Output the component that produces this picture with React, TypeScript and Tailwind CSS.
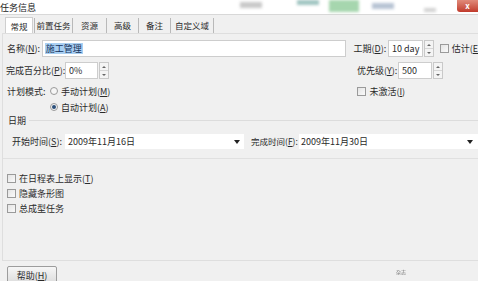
import React from "react";

const U = ({ children }: { children: React.ReactNode }) => (
    <span className="underline underline-offset-1">{children}</span>
);

const Spinner = () => (
    <div className="flex flex-col w-[10px] h-[17px] border border-[#c9c9c9] bg-[#f4f4f4] ml-[1px]">
        <div className="flex-1 flex items-center justify-center border-b border-[#d6d6d6]">
            <div className="w-0 h-0 border-l-[2px] border-r-[2px] border-b-[2px] border-l-transparent border-r-transparent border-b-[#666]" />
        </div>
        <div className="flex-1 flex items-center justify-center">
            <div className="w-0 h-0 border-l-[2px] border-r-[2px] border-t-[2px] border-l-transparent border-r-transparent border-t-[#666]" />
        </div>
    </div>
);

const Check = () => (
    <div className="w-[9px] h-[9px] border border-[#9a9a9a] bg-gradient-to-br from-[#e4e4e4] to-[#fafafa]" />
);

const Radio = ({ on }: { on?: boolean }) => (
    <div className="w-[8px] h-[8px] rounded-full border border-[#9a9a9a] bg-[#f6f6f6] flex items-center justify-center">
        {on && <div className="w-[4px] h-[4px] rounded-full bg-[#2a4f7a]" />}
    </div>
);

const Arrow = () => (
    <div className="w-0 h-0 border-l-[3px] border-r-[3px] border-t-[4px] border-l-transparent border-r-transparent border-t-[#222]" />
);

export default function App() {
    return (
        <div
            className="w-[478px] h-[281px] overflow-hidden bg-[#f0f0f0] text-[9px] leading-none text-[#2a2a2a] flex flex-col"
            style={{ fontFamily: '"Noto Sans CJK SC", "Noto Sans", sans-serif' }}
        >
            {/* title bar */}
            <div className="h-[15px] shrink-0 bg-white border-b border-[#d8d8d8] flex items-start">
                <span className="mt-[3px] text-[9px] text-[#222]">任务信息</span>
                <div className="ml-[204px] mt-[2px] w-[22px] h-[6px] bg-[#c9c9c9] blur-[1.5px]" />
                <div className="ml-[35px] mt-[0px] w-[22px] h-[5px] bg-[#9fc4c0] blur-[1.5px]" />
                <div className="ml-[10px] w-[30px] h-[12px] bg-[#a6d6ae] blur-[1.5px]" />
                <div className="ml-[13px] mt-[3px] w-[22px] h-[6px] bg-[#b8c4d4] blur-[1.5px]" />
                <div className="ml-[30px] mt-[8px] w-[12px] h-[4px] bg-[#d2d2d2] blur-[1.5px]" />
                <div className="ml-auto w-[21px] h-[12px] rounded-bl-[3px] bg-gradient-to-b from-[#e08a7a] to-[#c0392b] flex items-center justify-center text-white text-[8px] font-bold">
                    x
                </div>
            </div>

            {/* tabs */}
            <div className="h-[18px] shrink-0 flex items-end pl-[5px] text-[8.5px]">
                <div className="w-[28px] h-[17px] flex items-center justify-center bg-white border border-b-0 border-[#cfcfcf] -mb-px">
                    常规
                </div>
                <div className="h-[15px] flex items-center ml-[1px]">
                    <div className="w-[39px] h-[15px] flex items-center justify-center border-x border-[#b9b9b9]">前置任务</div>
                    <div className="w-[34px] h-[15px] flex items-center justify-center border-r border-[#b9b9b9]">资源</div>
                    <div className="w-[32px] h-[15px] flex items-center justify-center border-r border-[#b9b9b9]">高级</div>
                    <div className="w-[32px] h-[15px] flex items-center justify-center border-r border-[#b9b9b9]">备注</div>
                    <div className="w-[43px] h-[15px] flex items-center justify-center border-r border-[#b9b9b9]">自定义域</div>
                </div>
            </div>

            {/* panel */}
            <div className="h-[228px] shrink-0 ml-[2px] border-l border-t border-b border-[#dedede] bg-[#f0f0f0] flex flex-col">
                {/* name row */}
                <div className="h-[17px] mt-[6px] flex items-center">
                    <span className="ml-[4px] w-[35px]">名称(<U>N</U>):</span>
                    <div className="w-[308px] h-[17px] bg-white border border-[#cdcdcd] flex items-center pl-[2px]">
                        <span className="bg-[#a9cff2] text-[#15325a] px-[1px] py-[1px]">施工管理</span>
                    </div>
                    <span className="ml-[7px] w-[35px]">工期(<U>D</U>):</span>
                    <div className="w-[35px] h-[17px] bg-white border border-[#cdcdcd] flex items-center pl-[3px] overflow-hidden whitespace-nowrap">
                        10 day
                    </div>
                    <Spinner />
                    <div className="ml-[6px]">
                        <Check />
                    </div>
                    <span className="ml-[3px] whitespace-nowrap">估计(<U>E</U></span>
                </div>

                {/* percent row */}
                <div className="h-[17px] mt-[5px] flex items-center">
                    <span className="ml-[3px] w-[59px] whitespace-nowrap">完成百分比(<U>P</U>):</span>
                    <div className="w-[33px] h-[17px] bg-white border border-[#cdcdcd] flex items-center pl-[3px]">0%</div>
                    <Spinner />
                    <span className="ml-[248px] w-[41px] whitespace-nowrap">优先级(<U>Y</U>):</span>
                    <div className="w-[34px] h-[17px] bg-white border border-[#cdcdcd] flex items-center pl-[3px]">500</div>
                    <Spinner />
                </div>

                {/* plan mode */}
                <div className="h-[14px] mt-[5px] flex items-center">
                    <span className="ml-[4px] w-[43px]">计划模式:</span>
                    <Radio />
                    <span className="ml-[3px]">手动计划(<U>M</U>)</span>
                    <div className="ml-[247px]">
                        <Check />
                    </div>
                    <span className="ml-[3px]">未激活(<U>I</U>)</span>
                </div>
                <div className="h-[14px] mt-[2px] flex items-center">
                    <div className="ml-[47px]">
                        <Radio on />
                    </div>
                    <span className="ml-[3px]">自动计划(<U>A</U>)</span>
                </div>

                {/* dates */}
                <div className="h-[10px] mt-[1px] flex items-center">
                    <span className="ml-[5px]">日期</span>
                    <div className="flex-1 ml-[3px] border-t border-[#dcdcdc]" />
                </div>
                <div className="h-[15px] mt-[9px] flex items-center">
                    <span className="ml-[9px] w-[53px] whitespace-nowrap">开始时间(<U>S</U>):</span>
                    <div className="w-[179px] h-[15px] bg-white flex items-center pl-[3px] pr-[4px] justify-between">
                        <span>2009年11月16日</span>
                        <Arrow />
                    </div>
                    <span className="ml-[7px] w-[48px] whitespace-nowrap text-[8.5px]">完成时间(<U>F</U>):</span>
                    <div className="flex-1 h-[15px] bg-white flex items-center pl-[2px] pr-[5px] justify-between">
                        <span>2009年11月30日</span>
                        <Arrow />
                    </div>
                </div>
                <div className="mt-[9px] border-t border-[#e0e0e0]" />

                {/* options */}
                <div className="mt-[12px] flex flex-col">
                    <div className="h-[15px] flex items-center">
                        <div className="ml-[4px]">
                            <Check />
                        </div>
                        <span className="ml-[3px]">在日程表上显示(<U>T</U>)</span>
                    </div>
                    <div className="h-[15px] flex items-center">
                        <div className="ml-[4px]">
                            <Check />
                        </div>
                        <span className="ml-[3px]">隐藏条形图</span>
                    </div>
                    <div className="h-[15px] flex items-center">
                        <div className="ml-[4px]">
                            <Check />
                        </div>
                        <span className="ml-[3px]">总成型任务</span>
                    </div>
                </div>
            </div>

            {/* footer */}
            <div className="flex items-start mt-[5px]">
                <div className="ml-[7px] w-[50px] h-[18px] border border-[#9c9c9c] rounded-[2px] bg-gradient-to-b from-[#f6f6f6] to-[#dcdcdc] flex items-center justify-center">
                    帮助(<U>H</U>)
                </div>
                <span className="ml-[339px] mt-[3px] text-[5px] text-[#666] blur-[0.3px]">杂志</span>
            </div>
        </div>
    );
}
